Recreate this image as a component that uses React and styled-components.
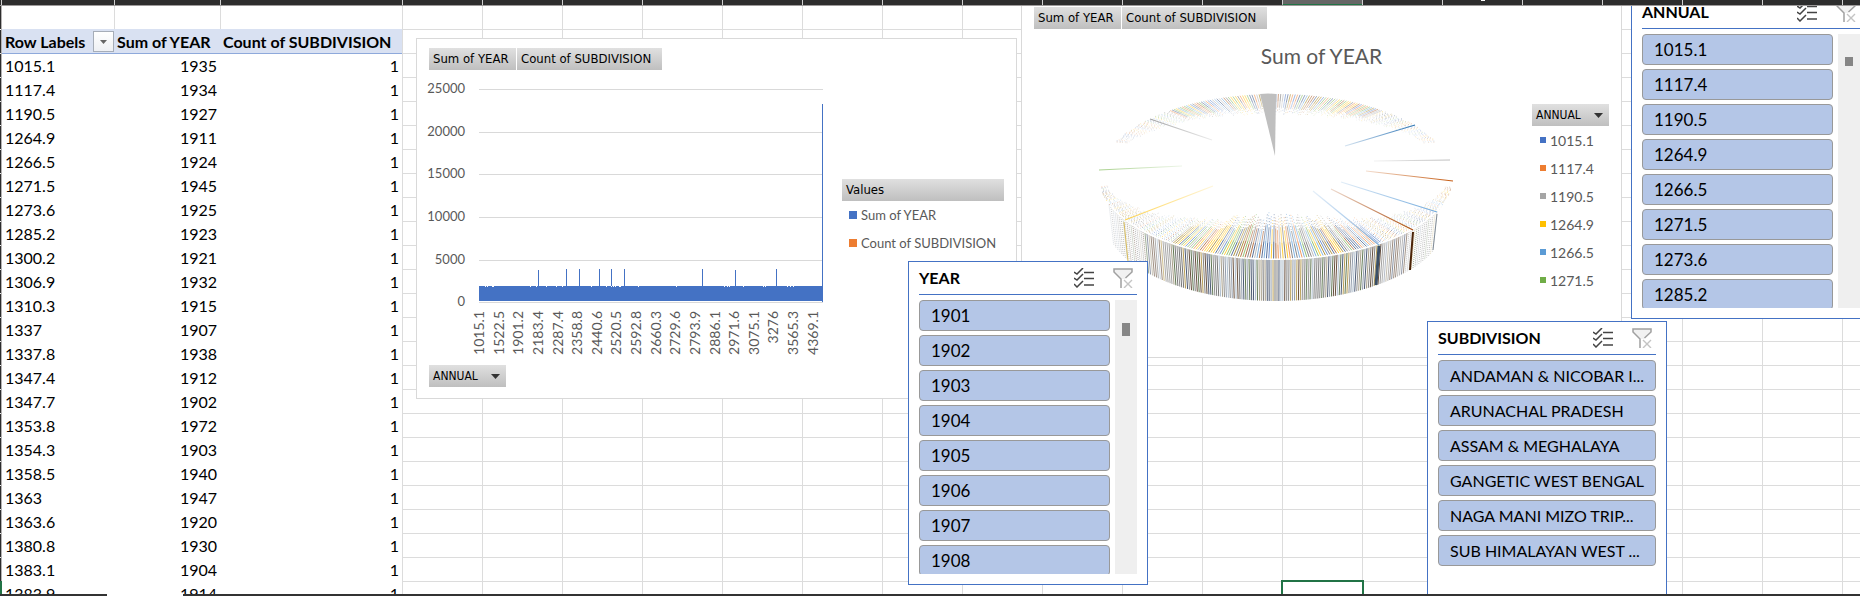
import React from "react";
import styled, { createGlobalStyle, css } from "styled-components";

const GlobalStyle = createGlobalStyle`
  * { box-sizing: border-box; }
  body { margin: 0; background: #fff; font-family: Lato, "Liberation Sans", sans-serif; }
  button { margin: 0; padding: 0; border: 0; background: none; font: inherit; color: inherit; }
`;

const gridLine = "#dcdcdc";
const accent = "#4472c4";
const chartText = "#595959";

/* ---------- sheet ---------- */

const Workbook = styled.div`
  display: flex;
  flex-direction: column;
  height: 100vh;
  overflow: hidden;
`;

const ColumnHeaders = styled.div`
  display: flex;
  flex: none;
  height: 6px;
  padding-left: 1px;
  overflow: hidden;
  background: #2d2d2d;
  border-bottom: 1px solid #9d9a9a;
`;

const ColumnHeader = styled.div`
  flex: none;
  width: ${(p) => p.$width}px;
  border-left: 1px solid #d0d0d0;
  ${(p) =>
    p.$active &&
    css`
      height: 6px;
      background: #666;
      border-bottom: 2px solid #217346;
    `}
`;

const LetterTail = styled.svg`
  display: block;
  margin: 0 auto;
`;

const SheetBody = styled.div`
  display: flex;
  flex: 1;
  min-height: 0;
`;

const RowHeaders = styled.div`
  flex: none;
  width: 2px;
  padding-top: 575px;
  border-right: 1px solid #b5b3b3;
  background: linear-gradient(#fff, #fff) 0 23px / 1px 1px no-repeat,
    repeating-linear-gradient(#2d2d2d 0 23px, #e8e8e8 23px 24px);
`;

const ActiveRow = styled.div`
  height: 24px;
  width: 2px;
  background: #217346;
`;

const Grid = styled.main`
  position: relative;
  flex: 1;
  min-width: 0;
  overflow: hidden;
  background-color: #fff;
  background-image: linear-gradient(90deg, ${gridLine} 1px, transparent 1px),
    linear-gradient(transparent 23px, ${gridLine} 23px);
  background-size: 80px 24px;
`;

const StatusEdge = styled.div`
  display: flex;
  flex: none;
  height: 2px;
  background: #333;
`;

const StatusGap = styled.div`
  width: 76px;
  margin-left: 107px;
  background: #fff;
`;

/* Things that float over the cells, placed by their anchor on the sheet. */
const Floating = styled.div`
  position: absolute;
  left: ${(p) => p.$x}px;
  top: ${(p) => p.$y}px;
`;

const CellCursor = styled.div`
  width: 83px;
  height: 27px;
  border: 2px solid #217346;
`;

/* ---------- pivot table ---------- */

const PivotTable = styled.table`
  width: 400px;
  table-layout: fixed;
  border-collapse: separate;
  border-spacing: 0;
  background: #fff;
  font-size: 16px;
  line-height: 22px;
  color: #000;
`;

const BlankCell = styled.td`
  height: 23px;
  padding: 0;
  & + & { border-left: 1px solid ${gridLine}; }
`;

const HeadCell = styled.th`
  height: 25px;
  padding: 1px 0 0 3px;
  background: #d9e1f2;
  border-bottom: 1px solid #8ea9db;
  font-weight: 700;
  text-align: left;
  white-space: nowrap;
`;

const HeadInner = styled.div`
  display: flex;
  align-items: center;
  justify-content: space-between;
`;

const FilterButton = styled.button`
  display: flex;
  align-items: center;
  justify-content: center;
  width: 21px;
  height: 21px;
  background: linear-gradient(#fff, #eef0f4);
  border: 1px solid #a6adb8;
`;

const Cell = styled.td`
  height: 24px;
  padding: 0 3px;
  text-align: ${(p) => (p.$number ? "right" : "left")};
`;

const pivotRows = [
  ["1015.1", 1935], ["1117.4", 1934], ["1190.5", 1927], ["1264.9", 1911],
  ["1266.5", 1924], ["1271.5", 1945], ["1273.6", 1925], ["1285.2", 1923],
  ["1300.2", 1921], ["1306.9", 1932], ["1310.3", 1915], ["1337", 1907],
  ["1337.8", 1938], ["1347.4", 1912], ["1347.7", 1902], ["1353.8", 1972],
  ["1354.3", 1903], ["1358.5", 1940], ["1363", 1947], ["1363.6", 1920],
  ["1380.8", 1930], ["1383.1", 1904], ["1383.9", 1914],
];

function Arrow({ width = 9, height = 5, color = "#333" }) {
  return (
    <svg width={width} height={height} viewBox="0 0 10 6" preserveAspectRatio="none" aria-hidden="true">
      <path d="M0 0H10L5 6Z" fill={color} />
    </svg>
  );
}

function Pivot() {
  return (
    <PivotTable>
      <colgroup>
        <col width="112" />
        <col width="106" />
        <col width="182" />
      </colgroup>
      <thead>
        <tr>
          <BlankCell />
          <BlankCell />
          <BlankCell />
        </tr>
        <tr>
          <HeadCell scope="col">
            <HeadInner>
              Row Labels
              <FilterButton aria-label="Filter row labels">
                <Arrow width={7} height={4} color="#666" />
              </FilterButton>
            </HeadInner>
          </HeadCell>
          <HeadCell scope="col">Sum of YEAR</HeadCell>
          <HeadCell scope="col">Count of SUBDIVISION</HeadCell>
        </tr>
      </thead>
      <tbody>
        {pivotRows.map(([label, year]) => (
          <tr key={label}>
            <Cell>{label}</Cell>
            <Cell $number>{year}</Cell>
            <Cell $number>1</Cell>
          </tr>
        ))}
      </tbody>
    </PivotTable>
  );
}

/* ---------- charts ---------- */

const ChartFrame = styled.section`
  display: flex;
  flex-direction: column;
  align-items: flex-start;
  width: 601px;
  height: 361px;
  padding: 9px 12px;
  background: #fff;
  border: 1px solid #d9d9d9;
`;

const FieldRow = styled.div`
  display: flex;
  gap: 1px;
`;

const FieldButton = styled.button`
  display: flex;
  align-items: center;
  justify-content: space-between;
  width: ${(p) => p.$width}px;
  height: 22px;
  padding: 0 ${(p) => (p.$menu ? 6 : 0)}px 0 4px;
  background: linear-gradient(#e0e0e0, #bfbfbf);
  color: #000;
  font-family: "DejaVu Sans Condensed", "Noto Sans", sans-serif;
  font-size: ${(p) => (p.$menu ? 12 : 13)}px;
  line-height: 22px;
  white-space: nowrap;
`;

const ChartTitle = styled.h2`
  align-self: stretch;
  margin: 0;
  font-size: 21px;
  font-weight: 400;
  line-height: 54px;
  text-align: center;
  color: ${chartText};
`;

const ChartBody = styled.div`
  display: flex;
`;

const Drawing = styled.svg`
  display: block;
  flex: none;
  overflow: visible;
`;

const AxisText = styled.text`
  font-family: Lato, sans-serif;
  font-size: ${(p) => p.$size}px;
  fill: ${chartText};
`;

const Legend = styled.div`
  padding-top: ${(p) => p.$top}px;
`;

const LegendList = styled.ul`
  margin: 0;
  padding: 0 0 0 ${(p) => p.$indent}px;
  list-style: none;
`;

const LegendItem = styled.li`
  display: flex;
  align-items: center;
  gap: 4px;
  height: 28px;
  font-size: ${(p) => p.$size}px;
  color: ${chartText};
  white-space: nowrap;
`;

const Swatch = styled.span`
  width: ${(p) => p.$size}px;
  height: ${(p) => p.$size}px;
  background: ${(p) => p.$color};
`;

function ValueFields() {
  return (
    <FieldRow>
      <FieldButton $width={87}>Sum of YEAR</FieldButton>
      <FieldButton $width={145}>Count of SUBDIVISION</FieldButton>
    </FieldRow>
  );
}

function AnnualField() {
  return (
    <FieldButton $width={77} $menu>
      ANNUAL
      <Arrow />
    </FieldButton>
  );
}

const yTicks = [[25000, 19], [20000, 62], [15000, 104], [10000, 147], [5000, 190], [0, 232]];
const xTicks = [
  "1015.1", "1522.5", "1901.2", "2183.4", "2287.4", "2358.8", "2440.6", "2520.5", "2592.8",
  "2660.3", "2729.6", "2793.9", "2886.1", "2971.6", "3075.1", "3276", "3565.3", "4369.1",
];
const spikes = [[109, 201], [137, 200], [150, 200], [170, 200], [182, 200], [195, 200], [273, 200], [306, 201], [347, 200]];
const notches = [56, 58, 63, 64, 101, 107, 117, 127, 133, 162, 177, 182, 184, 186, 190, 191, 209, 247, 295, 298, 300, 314, 334, 336, 358, 361, 364];

function ColumnChart() {
  return (
    <ChartFrame aria-label="Sum of YEAR and Count of SUBDIVISION by ANNUAL">
      <ValueFields />
      <ChartBody>
        <Drawing width="413" height="295" role="img" aria-label="Column chart">
          {yTicks.map(([v, y]) => (
            <g key={v}>
              <AxisText $size={13} x="36" y={y + 4} textAnchor="end">{v}</AxisText>
              <rect x="50" y={y} width="344" height="1" fill="#d9d9d9" />
            </g>
          ))}
          <rect x="50" y="216" width="344" height="15" fill={accent} />
          {spikes.map(([x, y]) => (
            <rect key={x} x={x} y={y - 1} width="1" height={232 - y} fill={accent} />
          ))}
          {notches.map((x) => (
            <rect key={x} x={x} y="216" width="1" height="1" fill="#fff" />
          ))}
          <rect x="393" y="34" width="1" height="198" fill={accent} />
          {xTicks.map((t, i) => {
            const x = 50 + Math.round(i * 19.63);
            return (
              <AxisText key={t} $size={14} textAnchor="end" transform={`translate(${x + 5} 241) rotate(-90)`}>
                {t}
              </AxisText>
            );
          })}
        </Drawing>
        <Legend $top={109}>
          <FieldButton $width={162}>Values</FieldButton>
          <LegendList $indent={7}>
            <LegendItem $size={13}><Swatch $size={8} $color={accent} />Sum of YEAR</LegendItem>
            <LegendItem $size={13}><Swatch $size={8} $color="#ed7d31" />Count of SUBDIVISION</LegendItem>
          </LegendList>
        </Legend>
      </ChartBody>
      <AnnualField />
    </ChartFrame>
  );
}

/* Seeded generator, so that the thin slices come out the same on every render. */
function makeRandom(seed) {
  let s = seed;
  return () => {
    s = (s * 1664525 + 1013904223) % 4294967296;
    return s / 4294967296;
  };
}

const slicePalette = ["#4472c4", "#ed7d31", "#a5a5a5", "#ffc000", "#5b9bd5", "#70ad47", "#264478", "#9e480e", "#636363", "#997300"];
const sidePalette = ["#7b7b7b", "#8c98a8", "#a39a83", "#41506b", "#5e4531", "#8a8a8a", "#58714a", "#b59a4e", "#a9b9c9", "#6f6f6f"];
const apex = { x: 241, y: 73 };
const rim = { x: 242, y: 94, rx: 177, ry: 83 };

function buildSlices() {
  const rand = makeRandom(11);
  const top = [];
  const side = [];
  const total = 460;
  for (let i = 0; i < total; i += 1) {
    const a = (i / total) * Math.PI * 2;
    const sin = Math.sin(a);
    const cos = Math.cos(a);
    if (sin > -0.42 && sin < 0.12) continue;
    const x = rim.x + rim.rx * cos;
    const y = rim.y + rim.ry * sin;
    const steep = Math.abs(sin);
    const back = sin < 0;
    const len = (back ? 0.34 : 0.46) * (0.08 + 0.92 * steep * steep) * (0.8 + rand() * 0.2);
    const color = slicePalette[Math.floor(rand() * slicePalette.length)];
    const at = (t) => [x + (apex.x - x) * t, y + (apex.y - y) * t].map((n) => n.toFixed(1)).join(" ");
    const strong = (back ? 0.5 : 0.78) * Math.max(0.5, (steep - 0.2) * 1.25);
    const dash = steep < 0.8 ? "1 2" : undefined;
    const shift = Math.floor(rand() * 3);
    top.push(<path key={`o${i}`} d={`M${at(0)}L${at(len * 0.4)}`} stroke={color} opacity={strong} strokeDasharray={dash} strokeDashoffset={shift} />);
    top.push(<path key={`m${i}`} d={`M${at(len * 0.4)}L${at(len * 0.75)}`} stroke={color} opacity={strong * 0.65} strokeDasharray={dash} strokeDashoffset={shift} />);
    top.push(<path key={`i${i}`} d={`M${at(len * 0.75)}L${at(len)}`} stroke={color} opacity={strong * 0.55} strokeDasharray="1 2" strokeDashoffset={shift} />);
  }
  for (let px = -167; px <= 161; px += 2) {
    const cos = px / rim.rx;
    const sin = Math.sqrt(1 - cos * cos);
    const color = sidePalette[Math.floor(rand() * sidePalette.length)];
    side.push(
      <path
        key={px}
        d={`M${rim.x + px} ${(rim.y + rim.ry * sin).toFixed(1)}L${(rim.x + 172 * cos).toFixed(1)} ${(134 + 84 * sin).toFixed(1)}`}
        stroke={color}
        opacity={sin > 0.8 ? 0.95 : 0.1 + sin * 0.7}
        strokeDasharray={sin < 0.66 ? "1 1" : undefined}
      />
    );
  }
  return { top, side };
}

const slices = buildSlices();

const longSlices = [
  { from: [381, 42], to: [311, 63], color: "#2e75b6" },
  { from: [116, 36], to: [178, 57], color: "#a5a5a5" },
  { from: [416, 77], to: [340, 78], color: "#bdbdbd" },
  { from: [419, 98], to: [332, 88], color: "#c55a11" },
  { from: [403, 129], to: [307, 99], color: "#6fa8dc" },
  { from: [379, 147], to: [297, 106], color: "#a9480c" },
  { from: [345, 162], to: [279, 108], color: "#7fb0e0" },
  { from: [65, 87], to: [148, 83], color: "#a9d18e" },
  { from: [91, 137], to: [179, 103], color: "#ffd34d" },
];

const longSides = [
  { d: "M345 163L342 202", color: "#3b4f66", width: 3 },
  { d: "M379 149L376 187", color: "#4a2308", width: 2 },
  { d: "M403 131L399 167", color: "#7f8b96", width: 1 },
  { d: "M90 139L94 178", color: "#d8b95a", width: 1 },
];

const pieLegend = [
  ["1015.1", "#4472c4"], ["1117.4", "#ed7d31"], ["1190.5", "#a5a5a5"],
  ["1264.9", "#ffc000"], ["1266.5", "#5b9bd5"], ["1271.5", "#70ad47"],
];

function PieChart() {
  return (
    <ChartFrame aria-label="Sum of YEAR">
      <ValueFields />
      <ChartTitle>Sum of YEAR</ChartTitle>
      <ChartBody>
        <Drawing width="498" height="230" role="img" aria-label="3-D pie chart" fill="none">
          <defs>
            {longSlices.map((s, i) => (
              <linearGradient
                key={i}
                id={`slice${i}`}
                gradientUnits="userSpaceOnUse"
                x1={s.from[0]}
                y1={s.from[1]}
                x2={s.to[0]}
                y2={s.to[1]}
              >
                <stop offset="0" stopColor={s.color} />
                <stop offset="1" stopColor={s.color} stopOpacity="0.2" />
              </linearGradient>
            ))}
          </defs>
          {slices.side}
          {slices.top}
          <path d="M76 122A177 83 0 0 0 408 122" stroke="#fff" strokeWidth="1.5" />
          <path d="M226 11Q234 10 242 11L241 73Z" fill="#bfbfbf" />
          {longSlices.map((s, i) => (
            <path
              key={i}
              d={`M${s.from.join(" ")}L${s.to.join(" ")}`}
              stroke={`url(#slice${i})`}
              strokeWidth="1.2"
            />
          ))}
          {longSides.map((s) => (
            <path key={s.d} d={s.d} stroke={s.color} strokeWidth={s.width} />
          ))}
        </Drawing>
        <Legend $top={21}>
          <AnnualField />
          <LegendList $indent={8}>
            {pieLegend.map(([label, color]) => (
              <LegendItem key={label} $size={14}><Swatch $size={6} $color={color} />{label}</LegendItem>
            ))}
          </LegendList>
        </Legend>
      </ChartBody>
    </ChartFrame>
  );
}

/* ---------- slicers ---------- */

const SlicerFrame = styled.section`
  width: 240px;
  height: 324px;
  padding: 0 10px;
  background: #fff;
  border: 1px solid ${accent};
`;

const SlicerHeader = styled.header`
  display: flex;
  align-items: center;
  gap: 19px;
  height: 33px;
  padding-right: 4px;
  border-bottom: 1px solid ${accent};
`;

const SlicerTitle = styled.h3`
  flex: 1;
  margin: 0;
  font-size: 16px;
  font-weight: 700;
  line-height: 32px;
  color: #000;
`;

const IconButton = styled.button`
  width: 20px;
  height: 20px;
  svg { display: block; }
`;

const SlicerBody = styled.div`
  display: flex;
  gap: 5px;
  height: 274px;
  margin-top: 5px;
  overflow: hidden;
`;

const SlicerItems = styled.div`
  display: flex;
  flex: 1;
  flex-direction: column;
  gap: 4px;
  min-width: 0;
`;

const SlicerItem = styled.button`
  flex: none;
  height: 31px;
  padding: 0 11px;
  background: #b4c6e7;
  border: 1px solid #999;
  border-radius: 4px;
  font-size: ${(p) => p.$size}px;
  line-height: 28px;
  text-align: left;
  white-space: nowrap;
  color: #000;
`;

const ScrollTrack = styled.div`
  flex: none;
  width: 22px;
  padding: 23px 7px 0;
  background: #efefef;
`;

const ScrollThumb = styled.div`
  height: ${(p) => p.$height}px;
  background: #868686;
`;

function Slicer({ title, items, size = 17, thumb }) {
  return (
    <SlicerFrame aria-label={title}>
      <SlicerHeader>
        <SlicerTitle>{title}</SlicerTitle>
        <IconButton aria-label="Multi-select">
          <svg width="20" height="20" fill="none" stroke="#444" aria-hidden="true">
            <path d="M0 4L3 6L9 0M0 10L3 12L9 6M0 16L3 19L9 13" strokeWidth="1.5" />
            <path d="M10 4.5H20M10 10.5H20M10 17H20" strokeWidth="1.3" />
          </svg>
        </IconButton>
        <IconButton aria-label="Clear filter">
          <svg width="20" height="20" fill="none" aria-hidden="true">
            <path d="M1 1H19V4L12 11H8L1 4Z" fill="#f1f1f1" />
            <path d="M8 20V11L1 4V1H19V4L12.500 10" stroke="#a0a0a0" strokeWidth="1.5" />
            <path d="M11 12L19 20M19 12L11 20" stroke="#c4c4c4" strokeWidth="1.4" />
          </svg>
        </IconButton>
      </SlicerHeader>
      <SlicerBody>
        <SlicerItems>
          {items.map((item) => (
            <SlicerItem key={item} $size={size}>{item}</SlicerItem>
          ))}
        </SlicerItems>
        {thumb && (
          <ScrollTrack>
            <ScrollThumb $height={thumb} />
          </ScrollTrack>
        )}
      </SlicerBody>
    </SlicerFrame>
  );
}

const annualItems = pivotRows.slice(0, 8).map(([label]) => label);
const yearItems = ["1901", "1902", "1903", "1904", "1905", "1906", "1907", "1908"];
const subdivisionItems = [
  "ANDAMAN & NICOBAR I...",
  "ARUNACHAL PRADESH",
  "ASSAM & MEGHALAYA",
  "GANGETIC WEST BENGAL",
  "NAGA MANI MIZO TRIP...",
  "SUB HIMALAYAN WEST ...",
];

const columnWidths = [113, 106, 182, ...Array(40).fill(80)];

export default function App() {
  return (
    <Workbook>
      <GlobalStyle />
      <ColumnHeaders>
        {columnWidths.map((w, i) => (
          <ColumnHeader key={i} $width={w} $active={i === 14}>
            {i === 16 && (
              <LetterTail width="4" height="1" aria-hidden="true">
                <rect width="4" height="1" fill="#fff" />
              </LetterTail>
            )}
          </ColumnHeader>
        ))}
      </ColumnHeaders>
      <SheetBody>
        <RowHeaders>
          <ActiveRow />
        </RowHeaders>
        <Grid>
          <Pivot />
          <Floating $x={1279} $y={574}><CellCursor /></Floating>
          <Floating $x={414} $y={32}><ColumnChart /></Floating>
          <Floating $x={1019} $y={-9}><PieChart /></Floating>
          <Floating $x={906} $y={255}><Slicer title="YEAR" items={yearItems} thumb={13} /></Floating>
          <Floating $x={1629} $y={-11}><Slicer title="ANNUAL" items={annualItems} thumb={9} /></Floating>
          <Floating $x={1425} $y={315}><Slicer title="SUBDIVISION" items={subdivisionItems} size={16} /></Floating>
        </Grid>
      </SheetBody>
      <StatusEdge>
        <StatusGap />
      </StatusEdge>
    </Workbook>
  );
}
